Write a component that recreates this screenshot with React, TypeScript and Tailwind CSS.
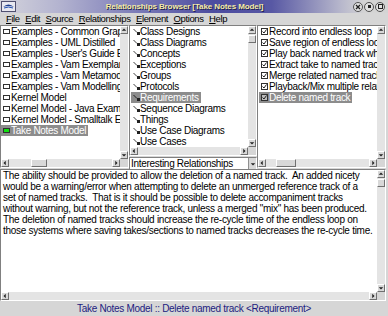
import React from "react";

const leftItems = [
  "Examples - Common Graphics",
  "Examples - UML Distilled",
  "Examples - User's Guide Examples",
  "Examples - Vam Exemplars",
  "Examples - Vam Metamodel",
  "Examples - Vam Modelling",
  "Kernel Model",
  "Kernel Model - Java Examples",
  "Kernel Model - Smalltalk Examples",
  "Take Notes Model",
];

const midItems = [
  "Class Designs",
  "Class Diagrams",
  "Concepts",
  "Exceptions",
  "Groups",
  "Protocols",
  "Requirements",
  "Sequence Diagrams",
  "Things",
  "Use Case Diagrams",
  "Use Cases",
];

const rightItems = [
  "Record into endless loop",
  "Save region of endless loop",
  "Play back named track while recording",
  "Extract take to named track",
  "Merge related named tracks",
  "Playback/Mix multiple related tracks",
  "Delete named track",
];

const bodyText = [
  "The ability should be provided to allow the deletion of a named track.  An added nicety",
  "would be a warning/error when attempting to delete an unmerged reference track of a",
  "set of named tracks.  That is it should be possible to delete accompaniment tracks",
  'without warning, but not the reference track, unless a merged "mix" has been produced.',
  "The deletion of named tracks should increase the re-cycle time of the endless loop on",
  "those systems where saving takes/sections to named tracks decreases the re-cycle time.",
];

function Arrow({ dir }: { dir: "up" | "down" | "left" | "right" }) {
  const pts = {
    up: "1,5 4,2 7,5",
    down: "1,3 4,6 7,3",
    left: "5,1 2,4 5,7",
    right: "3,1 6,4 3,7",
  }[dir];
  return (
    <div className="w-[8px] h-[8px] shrink-0 bg-[#d8d8d8] border-t border-l border-t-white border-l-white border-b border-r border-b-[#707070] border-r-[#707070] flex items-center justify-center">
      <svg width="6" height="6" viewBox="0 0 8 8">
        <polygon points={pts} fill="#202020" />
      </svg>
    </div>
  );
}

function Thumb({ className }: { className: string }) {
  return (
    <div
      className={`bg-[#d8d8d8] border-t border-l border-t-white border-l-white border-b border-r border-b-[#707070] border-r-[#707070] ${className}`}
    />
  );
}

function VScroll({ thumb }: { thumb?: boolean }) {
  return (
    <div className="w-[8px] shrink-0 flex flex-col bg-[#e4e4e4]">
      <Arrow dir="up" />
      <div className="flex-1 flex flex-col">
        {thumb && <Thumb className="mt-[1px] h-[8px] w-[8px]" />}
      </div>
      <Arrow dir="down" />
    </div>
  );
}

function HScroll({ thumbLeft }: { thumbLeft: string }) {
  return (
    <div className="h-[8px] shrink-0 flex bg-[#e4e4e4]">
      <Arrow dir="left" />
      <div className="flex-1 flex">
        <Thumb className={`h-[8px] w-[16px] ${thumbLeft}`} />
      </div>
      <Arrow dir="right" />
    </div>
  );
}

function ListIcon({ kind, sel }: { kind: "box" | "green" | "rel" | "check"; sel?: boolean }) {
  if (kind === "box" || kind === "green") {
    return (
      <span
        className={`inline-block w-[7px] h-[5px] mr-[1px] shrink-0 border border-[#303030] ${
          kind === "green" ? "bg-[#10e010]" : "bg-white"
        }`}
      />
    );
  }
  if (kind === "rel") {
    return (
      <svg width="7" height="8" viewBox="0 0 7 8" className="shrink-0">
        <line x1="0.5" y1="1" x2="4" y2="4.5" stroke={sel ? "#202020" : "#404040"} strokeWidth="1" />
        <rect x="4" y="4" width="3" height="3" fill="#202020" />
      </svg>
    );
  }
  return (
    <svg width="7" height="7" viewBox="0 0 7 7" className="mr-[1px] shrink-0">
      <rect x="0.5" y="0.5" width="6" height="6" fill={sel ? "#bdbdbd" : "white"} stroke="#303030" />
      <polyline points="1.5,3.5 3,5 5.5,1.5" fill="none" stroke="#202020" strokeWidth="1" />
    </svg>
  );
}

function Row({
  text,
  icon,
  sel,
}: {
  text: string;
  icon: "box" | "green" | "rel" | "check";
  sel?: boolean;
}) {
  return (
    <div className="h-[11px] flex items-center whitespace-nowrap">
      <div
        className={`flex items-center h-[11px] pl-[2px] pr-[2px] ${
          sel ? "bg-[#8c8c8c] text-white" : "text-black"
        }`}
      >
        <ListIcon kind={icon} sel={sel} />
        <span className="leading-[11px]">{text}</span>
      </div>
    </div>
  );
}

const sunken =
  "border-t border-l border-t-[#808080] border-l-[#808080] border-b border-r border-b-white border-r-white";

export default function App() {
  return (
    <div className="w-[388px] h-[316px] bg-[#d6d6d6] flex flex-col overflow-hidden font-['Liberation_Sans',Arial,sans-serif] text-[10px] tracking-[-0.3px] text-black">
      {/* title bar */}
      <div className="h-[13px] shrink-0 flex items-center bg-[linear-gradient(to_right,#d4d4dc_0%,#b4b4d0_15%,#7c7cb8_35%,#4c4ca0_55%,#5858a4_70%,#b8b8cc_88%,#d4d4d4_94%)]">
        <div className="w-[15px] h-[11px] ml-[1px] bg-[#e8e8f0] border border-[#505070] flex items-center justify-center">
          <svg width="11" height="7" viewBox="0 0 11 7">
            <path d="M0 4 Q5.5 -1 11 4 Q5.5 2 0 4Z" fill="#1c3c8c" />
            <path d="M1 5 Q5.5 3 10 5" stroke="#2050b0" fill="none" />
          </svg>
        </div>
        <div className="flex-1 text-center text-[8px] font-bold tracking-[-0.1px] text-[#f4eca8] [text-shadow:1px_1px_0_#202050] leading-[13px]">
          Relationships Browser [Take Notes Model]
        </div>
        <div className="flex gap-[1px] mr-[3px]">
          {["x", "o", "s"].map((k) => (
            <div
              key={k}
              className="w-[10px] h-[10px] rounded-full border border-[#505050] bg-[#e0e0e0] flex items-center justify-center"
            >
              {k === "x" && (
                <svg width="6" height="6" viewBox="0 0 6 6">
                  <path d="M1 1 L5 5 M5 1 L1 5" stroke="#202020" strokeWidth="1.3" />
                </svg>
              )}
              {k === "o" && <div className="w-[3px] h-[3px] bg-[#202020]" />}
              {k === "s" && <div className="w-[5px] h-[5px] border border-[#202020]" />}
            </div>
          ))}
        </div>
      </div>

      {/* menu bar */}
      <div className="h-[12px] shrink-0 flex items-center pl-[6px] gap-[5.5px] leading-[12px] text-[9.5px] tracking-[-0.4px]">
        {["File", "Edit", "Source", "Relationships", "Element", "Options", "Help"].map((m) => (
          <span key={m}>
            <span className="underline underline-offset-1">{m[0]}</span>
            {m.slice(1)}
          </span>
        ))}
      </div>

      {/* three panes */}
      <div className="h-[143px] shrink-0 flex pr-[2px]">
        <div className={`w-[129px] shrink-0 flex flex-col bg-white ${sunken}`}>
          <div className="flex-1 flex min-h-0">
            <div className="flex-1 min-w-0 overflow-hidden">
              {leftItems.map((t, i) => (
                <Row key={t} text={t} icon={i === 9 ? "green" : "box"} sel={i === 9} />
              ))}
            </div>
            <VScroll />
          </div>
          <div className="flex">
            <div className="flex-1">
              <HScroll thumbLeft="ml-[22px]" />
            </div>
            <div className="w-[8px] bg-[#d6d6d6]" />
          </div>
        </div>

        <div className="w-[128px] shrink-0 flex flex-col">
          <div className={`flex-1 flex flex-col bg-white ${sunken}`}>
            <div className="flex-1 flex min-h-0">
              <div className="flex-1 min-w-0 overflow-hidden pl-[1px]">
                {midItems.map((t, i) => (
                  <Row key={t} text={t} icon="rel" sel={i === 6} />
                ))}
              </div>
              <VScroll thumb />
            </div>
            <div className="flex">
              <div className="flex-1">
                <HScroll thumbLeft="hidden" />
              </div>
              <div className="w-[8px] bg-[#d6d6d6]" />
            </div>
          </div>
          <div className={`h-[13px] mt-[1px] flex items-center bg-white ${sunken}`}>
            <span className="flex-1 pl-[1px] leading-[11px] whitespace-nowrap overflow-hidden">
              Interesting Relationships
            </span>
            <div className="w-[8px] h-[11px] bg-[#d8d8d8] flex items-center justify-center border-l border-[#909090]">
              <svg width="6" height="6" viewBox="0 0 8 8">
                <polygon points="1,3 4,6 7,3" fill="#202020" />
              </svg>
            </div>
          </div>
        </div>

        <div className={`flex-1 min-w-0 flex flex-col bg-white ${sunken}`}>
          <div className="flex-1 flex min-h-0">
            <div className="flex-1 min-w-0 overflow-hidden pl-[1px]">
              {rightItems.map((t, i) => (
                <Row key={t} text={t} icon="check" sel={i === 6} />
              ))}
            </div>
            <VScroll />
          </div>
          <div className="flex">
            <div className="flex-1">
              <HScroll thumbLeft="ml-[10px] w-[20px]" />
            </div>
            <div className="w-[8px] bg-[#d6d6d6]" />
          </div>
        </div>
      </div>

      {/* description text */}
      <div className={`h-[132px] shrink-0 mt-[1px] mr-[2px] flex flex-col bg-white ${sunken}`}>
        <div className="flex-1 flex min-h-0">
          <div className="flex-1 min-w-0 overflow-hidden pl-[2px] tracking-[-0.28px]">
            {bodyText.map((l) => (
              <div key={l} className="h-[11px] leading-[11px] whitespace-pre">
                {l}
              </div>
            ))}
          </div>
          <VScroll thumb />
        </div>
        <div className="flex">
          <div className="flex-1">
            <HScroll thumbLeft="hidden" />
          </div>
          <div className="w-[8px] bg-[#d6d6d6]" />
        </div>
      </div>

      {/* status bar */}
      <div className="flex-1 flex items-center justify-center text-[#1c1c80]">
        Take Notes Model :: Delete named track &lt;Requirement&gt;
      </div>
    </div>
  );
}
